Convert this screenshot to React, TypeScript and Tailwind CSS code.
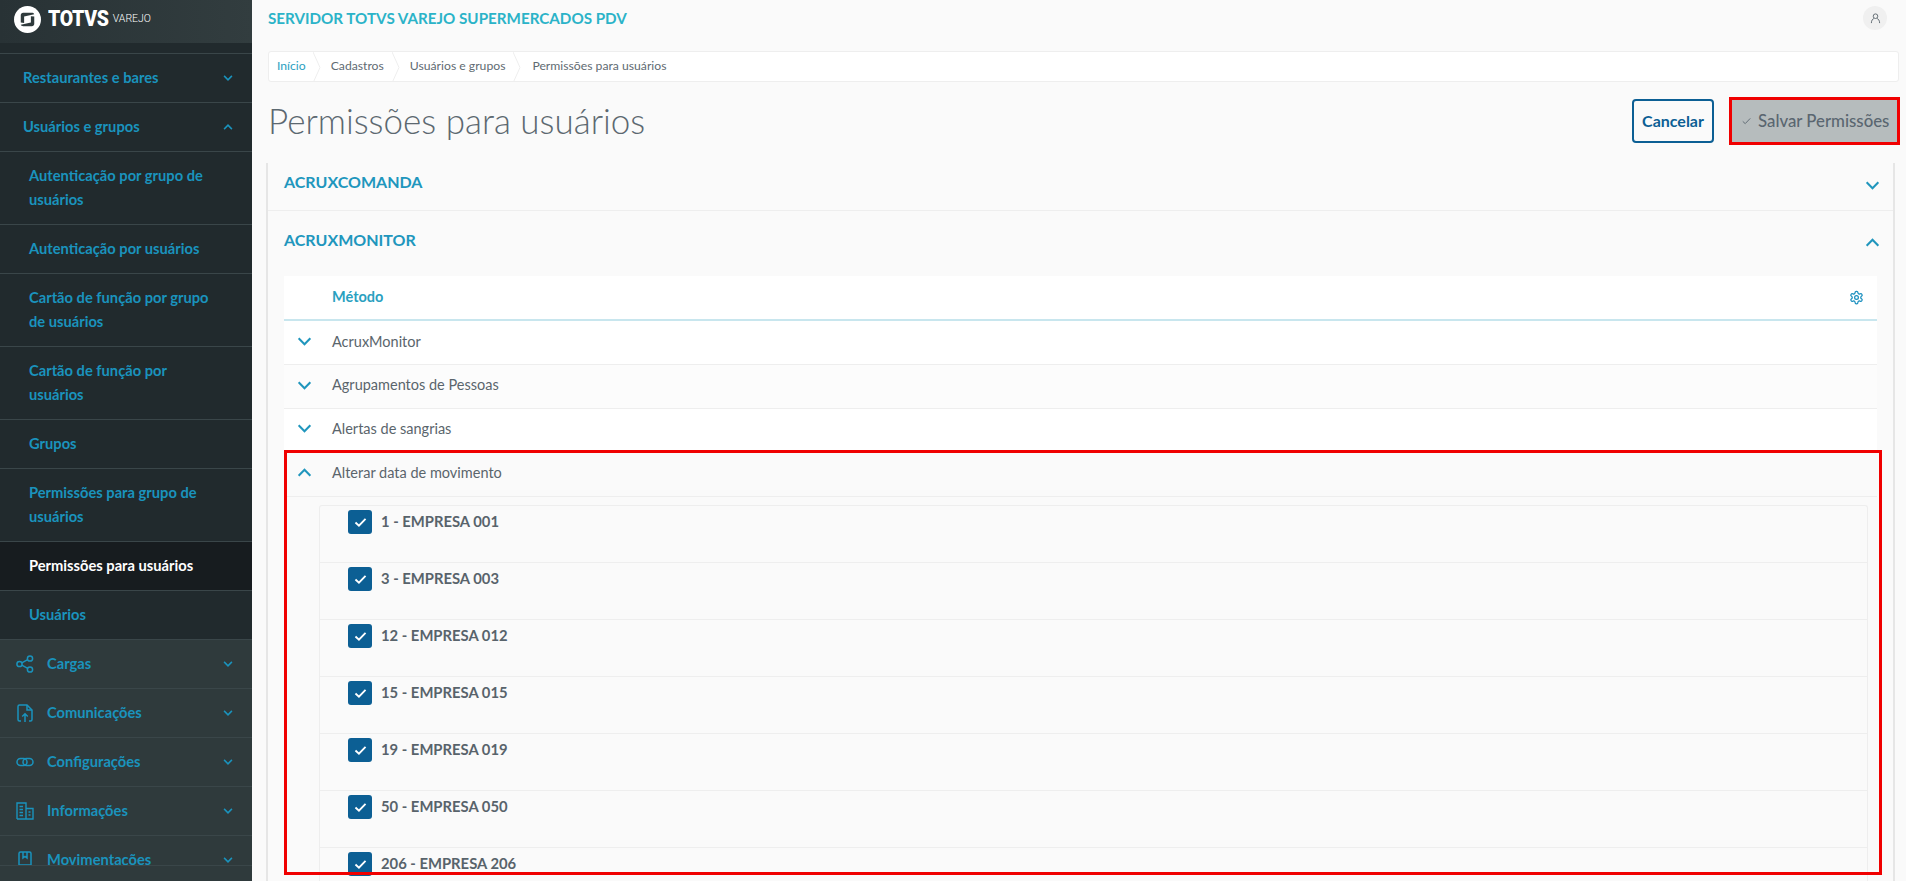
import React from "react";

const font = "font-['Lato','Noto_Sans',sans-serif]";

function Chevron({ up = false, className = "", sw = 2.3 }: { up?: boolean; className?: string; sw?: number }) {
  return (
    <svg viewBox="0 0 16 10" fill="none" stroke="currentColor" strokeWidth={sw} className={className}>
      <path d={up ? "M1.5 8.500 8 2l6.500 6.500" : "M1.500 1.500 8 8l6.500-6.500"} />
    </svg>
  );
}

function SideRow({ label, sub = false, active = false, tall = false, up = false, chevron = false, icon, bg }: { label: React.ReactNode; sub?: boolean; active?: boolean; tall?: boolean; up?: boolean; chevron?: boolean; icon?: React.ReactNode; bg?: string }) {
  return (
    <div className={`flex items-center shrink-0 border-b border-[#3a4649] ${tall ? "h-[73px]" : "h-[49px]"} ${active ? "bg-[#171c1f]" : bg || ""} ${sub ? "pl-[29px] pr-6" : icon ? "pl-4" : "pl-[23px]"}`}>
      {icon && <span className="w-[31px] shrink-0 text-[#1a93bd]">{icon}</span>}
      <span className={`text-[14.7px] leading-[24px] font-bold flex-1 pb-[3px] ${active ? "text-white" : "text-[#1a93bd]"}`}>{label}</span>
      {chevron && <Chevron up={up} sw={2.6} className="w-[10px] h-[6px] mr-[19px] text-[#1a93bd]" />}
    </div>
  );
}

const I = "w-[18px] h-[18px]";
const IconShare = () => (
  <svg viewBox="0 0 18 18" fill="none" stroke="currentColor" strokeWidth="1.5" className={I}>
    <circle cx="3.500" cy="9" r="2.600" /><circle cx="14" cy="3.500" r="2.600" /><circle cx="14" cy="14.500" r="2.600" />
    <path d="M5.800 7.800 11.700 4.700M5.800 10.200l5.900 3.100" />
  </svg>
);
const IconUpload = () => (
  <svg viewBox="0 0 18 18" fill="none" stroke="currentColor" strokeWidth="1.500" className={I}>
    <path d="M5 17H3.500A1.500 1.500 0 0 1 2 15.500v-13A1.500 1.500 0 0 1 3.500 1H11l5 5v9.500a1.500 1.500 0 0 1-1.500 1.500H13" />
    <path d="M11 1v5h5M9 18v-8M6.200 12.500 9 9.700l2.800 2.800" />
  </svg>
);
const IconLink = () => (
  <svg viewBox="0 0 18 18" fill="none" stroke="currentColor" strokeWidth="1.500" className={I}>
    <rect x="1" y="5.500" width="10" height="7" rx="3.500" />
    <rect x="7" y="5.500" width="10" height="7" rx="3.500" />
  </svg>
);
const IconBuilding = () => (
  <svg viewBox="0 0 18 18" fill="none" stroke="currentColor" strokeWidth="1.400" className={I}>
    <path d="M1 17V1h9v16M10 6.500h7V17H1" />
    <path d="M3.500 4.500h3.500M3.500 7.500h3.500M3.500 10.500h3.500M3.500 13.500h3.500M12.500 10h2M12.500 13h2" />
  </svg>
);
const IconBook = () => (
  <svg viewBox="0 0 18 18" fill="none" stroke="currentColor" strokeWidth="1.500" className={I}>
    <path d="M3 17V2.500A1.500 1.500 0 0 1 4.500 1h9A1.500 1.500 0 0 1 15 2.500V17M3 14h12" />
    <path d="M7 1v6l2-1.500L11 7V1" />
  </svg>
);

function Logo() {
  return (
    <div className="flex items-center pl-[14px] h-full pb-[5px]">
      <svg viewBox="0 0 28 28" className="w-[27px] h-[27px] shrink-0">
        <circle cx="14" cy="14" r="14" fill="#fff" />
        <path d="M7 17V9.500C7 8 8 7 9.500 7h9c1 0 2 .5 2.500 1.500L10.500 11v6.500z" fill="#2f3a3c" />
        <path d="M21 11v7.500c0 1.500-1 2.500-2.500 2.500h-9c-1 0-2-.5-2.500-1.500L17.500 17v-6.500z" fill="#2f3a3c" />
      </svg>
      <span className="ml-[7px] text-[19.5px] font-black text-white leading-none tracking-[-0.3px] scale-y-110 font-['Roboto',sans-serif]">TOTVS</span>
      <span className="ml-[4px] text-[10.5px] text-white leading-none mt-[1px] font-['Roboto',sans-serif] font-light">VAREJO</span>
    </div>
  );
}

function Crumb({ label, first = false }: { label: string; first?: boolean }) {
  return (
    <div className={`relative flex items-center h-full ${first ? "pl-[8px] pr-[14px] text-[#2aa0bf]" : "pl-[11px] pr-[15px] text-[#5f6b72]"}`}>
      <span>{label}</span>
      <svg viewBox="0 0 8 31" className="absolute right-[-1px] top-0 w-[8px] h-[31px]" fill="none" stroke="#eeeeee" strokeWidth="1">
        <path d="M0 0 7 15.500 0 31" />
      </svg>
    </div>
  );
}

function CheckRow({ label }: { label: string }) {
  return (
    <div className="h-[57px] shrink-0 border-b border-[#eeeeee] flex items-start pl-[28px] pt-[4px]">
      <span className="w-[24px] h-[24px] rounded-[3px] bg-[#0c5f94] flex items-center justify-center shrink-0">
        <svg viewBox="0 0 14 12" className="w-[13px] h-[11px]" fill="none" stroke="#fff" strokeWidth="2"><path d="M1.500 6 5.300 9.500 12.500 2" /></svg>
      </span>
      <span className="ml-[9px] text-[14.8px] leading-[22px] font-bold text-[#58636b]">{label}</span>
    </div>
  );
}

function MethodRow({ label, up = false, cls }: { label: string; up?: boolean; cls: string }) {
  return (
    <div className={`flex items-center shrink-0 border-b border-[#eeeeee] ${cls}`}>
      <span className="w-[48px] flex justify-center shrink-0 pr-[8px]">
        <Chevron up={up} className="w-[15px] h-[9px] text-[#2096bd]" />
      </span>
      <span className="text-[14.5px] text-[#5a656c]">{label}</span>
    </div>
  );
}

export default function App() {
  return (
    <div className={`flex h-[881px] w-[1906px] overflow-hidden bg-[#fafafa] ${font}`}>
      <aside className="w-[252px] shrink-0 h-full bg-[#2f3a3c] flex flex-col overflow-hidden">
        <div className="h-[43px] shrink-0 bg-gradient-to-r from-[#283235] to-[#323d3f]"><Logo /></div>
        <div className="h-[823px] shrink-0 flex flex-col bg-[#212a2d] border-b border-[#3a4649] overflow-hidden">
          <div className="h-[11px] shrink-0 border-b border-[#3a4649]" />
          <SideRow label="Restaurantes e bares" chevron />
          <SideRow label="Usuários e grupos" chevron up />
          <SideRow sub tall label={<>Autenticação por grupo de<br />usuários</>} />
          <SideRow sub label="Autenticação por usuários" />
          <SideRow sub tall label={<>Cartão de função por grupo<br />de usuários</>} />
          <SideRow sub tall label={<>Cartão de função por<br />usuários</>} />
          <SideRow sub label="Grupos" />
          <SideRow sub tall label={<>Permissões para grupo de<br />usuários</>} />
          <SideRow sub active label="Permissões para usuários" />
          <SideRow sub label="Usuários" />
          <SideRow bg="bg-[#2f3a3c]" label="Cargas" chevron icon={<IconShare />} />
          <SideRow bg="bg-[#2f3a3c]" label="Comunicações" chevron icon={<IconUpload />} />
          <SideRow bg="bg-[#2f3a3c]" label="Configurações" chevron icon={<IconLink />} />
          <SideRow bg="bg-[#2f3a3c]" label="Informações" chevron icon={<IconBuilding />} />
          <SideRow bg="bg-[#2f3a3c]" label="Movimentações" chevron icon={<IconBook />} />
        </div>
      </aside>

      <main className="relative flex-1 h-full flex flex-col overflow-hidden">
        <div className="h-[36px] shrink-0 flex items-center justify-between pl-[16px] pr-[19px]">
          <span className="text-[15.2px] font-bold text-[#2bb3c8]">SERVIDOR TOTVS VAREJO SUPERMERCADOS PDV</span>
          <span className="w-[24px] h-[24px] rounded-full bg-[#f0f0f0] flex items-center justify-center text-[#5a656c]">
            <svg viewBox="0 0 12 12" className="w-[11px] h-[11px]" fill="none" stroke="currentColor" strokeWidth="1"><circle cx="6" cy="3.500" r="2.500" /><path d="M1.500 11c0-3 1.500-4.500 2.700-5M10.500 11c0-3-1.500-4.500-2.700-5" /></svg>
          </span>
        </div>
        <div className="mt-[15px] ml-[16px] mr-[7px] h-[31px] shrink-0 bg-white border border-[#eeeeee] rounded-[3px] flex items-center text-[12.2px] overflow-hidden">
          <Crumb first label="Início" />
          <Crumb label="Cadastros" />
          <Crumb label="Usuários e grupos" />
          <span className="pl-[12px] text-[#5f6b72]">Permissões para usuários</span>
        </div>
        <div className="h-[81px] shrink-0 flex items-center justify-between pl-[16px] pr-[6px] pb-[3px]">
          <h1 className="text-[35px] font-light text-[#5c6870] font-['Lato',sans-serif] pb-[1px]">Permissões para usuários</h1>
          <div className="flex items-center gap-[15px]">
            <button className="w-[82px] h-[44px] border-2 border-[#0c5f94] rounded-[4px] text-[16px] font-bold text-[#0c5f94] bg-[#fafafa]">Cancelar</button>
            <button className="w-[171px] h-[48px] border-[3px] border-[#f00000] bg-[#b6bcbd] text-[16.8px] font-medium text-[#5a6670] flex items-center pl-[10px] whitespace-nowrap">
              <svg viewBox="0 0 12 10" className="w-[9px] h-[8px] mr-[7px]" fill="none" stroke="currentColor" strokeWidth="1.200"><path d="M1 5.500 4.300 8.500 11 1.500" /></svg>
              Salvar Permissões
            </button>
          </div>
        </div>

        <section className="ml-[14px] mr-[11px] flex-1 bg-[#fafafa] flex flex-col border-x-2 border-[#e6e6e6] overflow-hidden">
          <div className="h-[48px] shrink-0 border-b border-[#eeeeee] flex items-start justify-between pl-[16px] pr-[13px] pt-[7px]">
            <span className="text-[16px] font-bold text-[#2096bd]">ACRUXCOMANDA</span>
            <Chevron className="w-[15px] h-[9px] text-[#2096bd] mt-[11px]" />
          </div>
          <div className="h-[65px] shrink-0 flex items-start justify-between pl-[16px] pr-[13px] pt-[17px]">
            <span className="text-[16px] font-bold text-[#2096bd]">ACRUXMONITOR</span>
            <Chevron up className="w-[15px] h-[9px] text-[#2096bd] mt-[10px]" />
          </div>
          <div className="ml-[16px] mr-[16px] flex-1 flex flex-col overflow-hidden">
            <div className="h-[45px] shrink-0 bg-white border-b-2 border-[#c8e6ee] flex items-center justify-between pl-[48px] pr-[13px]">
              <span className="text-[14.5px] font-bold text-[#2aa0bf] pb-[1px]">Método</span>
              <svg viewBox="0 0 24 24" className="w-[15px] h-[15px] text-[#1a8fbf]" fill="none" stroke="currentColor" strokeWidth="2">
                <path d="M12.220 2h-.440a2 2 0 0 0-2 2v.180a2 2 0 0 1-1 1.730l-.430.250a2 2 0 0 1-2 0l-.150-.080a2 2 0 0 0-2.730.730l-.220.380a2 2 0 0 0 .730 2.730l.150.100a2 2 0 0 1 1 1.720v.510a2 2 0 0 1-1 1.740l-.150.090a2 2 0 0 0-.730 2.730l.220.380a2 2 0 0 0 2.730.730l.150-.080a2 2 0 0 1 2 0l.430.250a2 2 0 0 1 1 1.730V20a2 2 0 0 0 2 2h.440a2 2 0 0 0 2-2v-.180a2 2 0 0 1 1-1.730l.430-.250a2 2 0 0 1 2 0l.150.080a2 2 0 0 0 2.730-.730l.220-.390a2 2 0 0 0-.730-2.730l-.150-.080a2 2 0 0 1-1-1.740v-.500a2 2 0 0 1 1-1.740l.150-.090a2 2 0 0 0 .730-2.730l-.220-.380a2 2 0 0 0-2.730-.730l-.150.080a2 2 0 0 1-2 0l-.430-.250a2 2 0 0 1-1-1.730V4a2 2 0 0 0-2-2z" />
                <circle cx="12" cy="12" r="3" />
              </svg>
            </div>
            <MethodRow label="AcruxMonitor" cls="h-[44px] bg-white pb-[2px]" />
            <MethodRow label="Agrupamentos de Pessoas" cls="h-[44px] bg-[#fcfcfc] pb-[3px]" />
            <MethodRow label="Alertas de sangrias" cls="h-[43px] bg-white pb-[3px]" />
            <MethodRow up label="Alterar data de movimento" cls="h-[45px] bg-[#fafafa] pb-[3px]" />
            <div className="ml-[35px] mr-[9px] mt-[8px] border-x border-t border-[#eeeeee] rounded-t-[3px] flex flex-col">
              <CheckRow label="1 - EMPRESA 001" />
              <CheckRow label="3 - EMPRESA 003" />
              <CheckRow label="12 - EMPRESA 012" />
              <CheckRow label="15 - EMPRESA 015" />
              <CheckRow label="19 - EMPRESA 019" />
              <CheckRow label="50 - EMPRESA 050" />
              <CheckRow label="206 - EMPRESA 206" />
            </div>
          </div>
        </section>
        <div className="absolute left-[32px] top-[450px] w-[1598px] h-[425px] border-[3px] border-[#f00000] pointer-events-none" />
      </main>
    </div>
  );
}
